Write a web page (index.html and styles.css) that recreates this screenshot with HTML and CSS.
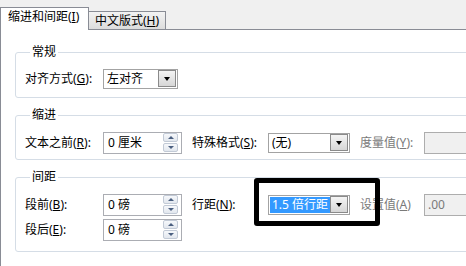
FILE: index.html
```html
<!DOCTYPE html>
<html lang="zh-CN">
<head>
  <meta charset="UTF-8">
  <title>段落</title>
  <link rel="stylesheet" href="styles.css">
</head>
<body>
  <!-- Tab strip -->
  <div class="tabs">
    <div class="tab active">缩进和间距(<u>I</u>)</div>
    <div class="tab">中文版式(<u>H</u>)</div>
  </div>

  <!-- Tab page -->
  <div class="panel">
    <fieldset class="group general">
      <legend>常规</legend>
      <div class="row">
        <span class="lbl first">对齐方式(<u>G</u>):</span>
        <div class="combo narrow"><span class="val">左对齐</span><span class="drop"></span></div>
      </div>
    </fieldset>

    <fieldset class="group indent">
      <legend>缩进</legend>
      <div class="row">
        <span class="lbl first">文本之前(<u>R</u>):</span>
        <div class="spin"><span class="val">0 厘米</span><span class="btns"><i class="up"></i><i class="down"></i></span></div>
        <span class="lbl second">特殊格式(<u>S</u>):</span>
        <div class="combo"><span class="val">(无)</span><span class="drop"></span></div>
        <span class="lbl third disabled">度量值(<u>Y</u>):</span>
        <div class="field disabled"></div>
      </div>
    </fieldset>

    <fieldset class="group spacing">
      <legend>间距</legend>
      <div class="row">
        <span class="lbl first">段前(<u>B</u>):</span>
        <div class="spin"><span class="val">0 磅</span><span class="btns"><i class="up"></i><i class="down"></i></span></div>
        <span class="lbl second">行距(<u>N</u>):</span>
        <div class="combo"><span class="val selected">1.5 倍行距</span><span class="drop"></span></div>
        <span class="lbl third disabled">设置值(<u>A</u>)</span>
        <div class="field disabled">.00</div>
      </div>
      <div class="row">
        <span class="lbl first">段后(<u>E</u>):</span>
        <div class="spin"><span class="val">0 磅</span><span class="btns"><i class="up"></i><i class="down"></i></span></div>
      </div>
    </fieldset>
  </div>

  <!-- Annotation box drawn over the line spacing combo -->
  <div class="mark"></div>
</body>
</html>
```

FILE: styles.css
```css
/* General Reset */
* {
  margin: 0;
  padding: 0;
  box-sizing: border-box;
}

body {
  width: 466px;
  height: 266px;
  overflow: hidden;
  position: relative;
  background: #fff;
  color: #000;
  font-family: "Noto Sans", "Noto Sans CJK SC", sans-serif;
  font-size: 12px;
  line-height: 16px;
}

u {
  text-decoration: underline;
  text-underline-offset: 1px;
}

/* Tab strip */
.tabs {
  height: 30px;
  background: #f0f0f0;
  border-bottom: 1px solid #898c95;
  display: flex;
  align-items: flex-end;
}

.tab {
  height: 18px;
  padding: 0 6px;
  border: 1px solid #898c95;
  border-bottom: none;
  margin-left: -1px;
  background: linear-gradient(#f3f3f3, #dcdcdc);
  line-height: 17px;
  width: 78px;
  white-space: nowrap;
}

.tab.active {
  margin-left: 0;
  width: 89px;
  height: 23px;
  margin-bottom: -1px;
  padding-left: 7px;
  background: #fff;
  line-height: 18px;
  position: relative;
  z-index: 1;
}

/* Tab page */
.panel {
  height: 236px;
  width: 540px;
  border-left: 1px solid #898c95;
  padding: 14px 0 0 14px;
}

.group {
  border: 1px solid #d5dde6;
  border-radius: 3px;
  padding: 0 0 0 9px;
  margin-bottom: 9px;
}

.group legend {
  margin-left: 5px;
  padding: 0 2px;
  line-height: 16px;
}

.general { padding-top: 7px; padding-bottom: 7px; }
.indent { padding-top: 8px; padding-bottom: 5px; }
.spacing { padding-top: 8px; padding-bottom: 10px; margin-bottom: 0; }

.row {
  display: flex;
  align-items: center;
  height: 23px;
}

.row + .row {
  margin-top: 2px;
}

.lbl {
  white-space: nowrap;
}

.lbl.first { width: 78px; }
.lbl.second { width: 76px; margin-left: 10px; }
.lbl.third { width: 64px; margin-left: 10px; }

.disabled { color: #7a7a7a; }

/* Combo box */
.combo {
  width: 82px;
  height: 20px;
  border: 1px solid #a3a3a3;
  display: flex;
  align-items: center;
  padding: 1px;
  background: #fff;
}

.combo.narrow { width: 75px; }

.combo .val {
  flex: 1;
  height: 16px;
  padding-left: 2px;
  line-height: 16px;
  white-space: pre;
}

.combo .val.selected {
  background: #3399ff;
  color: #fff;
}

.drop {
  width: 18px;
  height: 17px;
  border: 1px solid #8a8a8a;
  background: linear-gradient(#f4f4f4, #d6d6d6);
  position: relative;
}

.drop::after {
  content: "";
  position: absolute;
  left: 5px;
  top: 6px;
  border-left: 3.5px solid transparent;
  border-right: 3.5px solid transparent;
  border-top: 4px solid #000;
}

/* Spin box */
.spin {
  width: 79px;
  height: 22px;
  border: 1px solid #abadb3;
  display: flex;
  align-items: center;
  padding-left: 4px;
  background: #fff;
}

.spin .val { flex: 1; }

.btns {
  display: flex;
  flex-direction: column;
  gap: 1px;
  margin-right: 3px;
}

.btns i {
  width: 15px;
  height: 9px;
  border: 1px solid #c2cad6;
  border-radius: 2px;
  background: linear-gradient(#f6f8fb, #e2e7ee);
  position: relative;
}

.btns i::after {
  content: "";
  position: absolute;
  left: 3.5px;
  border-left: 3.5px solid transparent;
  border-right: 3.5px solid transparent;
}

.btns .up::after { top: 2px; border-bottom: 3px solid #4a5f80; }
.btns .down::after { top: 2px; border-top: 3px solid #4a5f80; }

/* Disabled edit field */
.field {
  width: 60px;
  height: 22px;
  border: 1px solid #adadad;
  background: #f0f0f0;
  padding-left: 3px;
  line-height: 20px;
}

/* Black annotation frame */
.mark {
  position: absolute;
  left: 254px;
  top: 178px;
  width: 126px;
  height: 48px;
  border: 5px solid #000;
  border-radius: 3px;
}
```
